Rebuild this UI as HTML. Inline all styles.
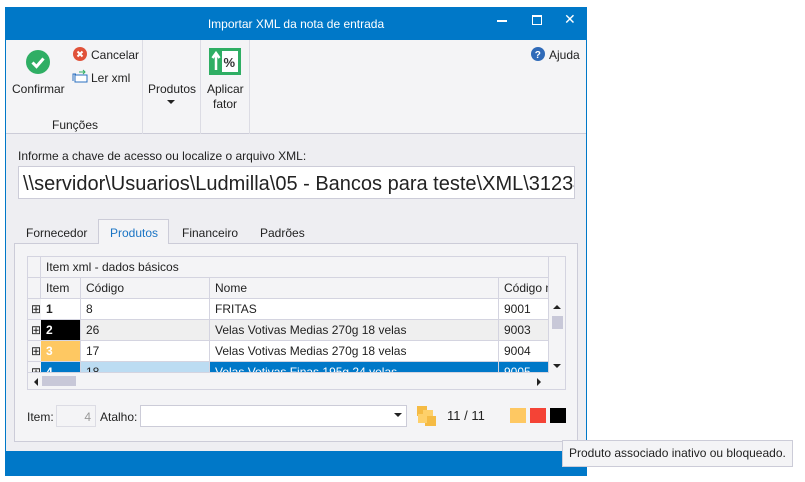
<!DOCTYPE html>
<html><head><meta charset="utf-8"><style>
*{box-sizing:border-box;margin:0;padding:0}
body{width:805px;height:482px;background:#fff;font-family:"Liberation Sans",sans-serif;font-size:12px;color:#222;position:relative;overflow:hidden}
.a{position:absolute}
.win{left:5px;top:7px;width:582px;height:469px;background:#eeeef2;border:1px solid #0078c8}
.t{white-space:nowrap}
.cell{position:absolute;border-right:1px solid #d4d4e0;border-bottom:1px solid #d4d4e0;padding-left:5px;line-height:20px;white-space:nowrap;overflow:hidden}
</style></head><body>
<div class="a win"></div>
<div class="a" style="left:5px;top:7px;width:582px;height:33px;background:#0078c8"></div>
<div class="a t" style="left:0;top:17px;width:592px;text-align:center;color:#fff;font-size:12px">Importar XML da nota de entrada</div>
<div class="a" style="left:497px;top:20px;width:10px;height:2px;background:#fff"></div>
<div class="a" style="left:532px;top:15px;width:10px;height:10px;border:1px solid #fff;border-top-width:2px"></div>
<div class="a t" style="left:564px;top:11px;color:#fff;font-size:14px">✕</div>
<div class="a" style="left:6px;top:40px;width:580px;height:94px;background:#f4f4f6;border-bottom:1px solid #ccccd8"></div>
<div class="a" style="left:142px;top:40px;width:1px;height:94px;background:#dcdce4"></div>
<div class="a" style="left:200px;top:40px;width:1px;height:94px;background:#dcdce4"></div>
<div class="a" style="left:249px;top:40px;width:1px;height:94px;background:#dcdce4"></div>
<svg class="a" style="left:26px;top:50px" width="24" height="24"><circle cx="12" cy="12" r="12" fill="#2fae64"/><path d="M6.5 12.5l4 4 7-8" stroke="#fff" stroke-width="3" fill="none"/></svg>
<div class="a t" style="left:12px;top:82px">Confirmar</div>
<svg class="a" style="left:73px;top:47px" width="14" height="14"><circle cx="7" cy="7" r="7" fill="#e0523a"/><path d="M4.5 4.5l5 5M9.5 4.5l-5 5" stroke="#fff" stroke-width="2"/></svg>
<div class="a t" style="left:91px;top:48px">Cancelar</div>
<svg class="a" style="left:72px;top:68px" width="16" height="16"><rect x="3" y="7" width="12" height="7" fill="#fff" stroke="#2a6fc0"/><path d="M1 13V6h3" stroke="#2a6fc0" fill="none"/><path d="M7 4h6M11 2l2 2-2 2" stroke="#2fae64" fill="none"/></svg>
<div class="a t" style="left:91px;top:71px">Ler xml</div>
<div class="a t" style="left:52px;top:118px">Funções</div>
<div class="a t" style="left:148px;top:82px">Produtos</div>
<div class="a" style="left:167px;top:100px;border-left:4px solid transparent;border-right:4px solid transparent;border-top:4px solid #222"></div>
<svg class="a" style="left:209px;top:48px" width="32" height="27"><rect width="32" height="27" fill="#2fae64"/><rect x="13" y="3" width="16" height="21" fill="#fff"/><path d="M7 22V6M3.5 10L7 5l3.5 5" stroke="#fff" stroke-width="2.5" fill="none"/><text x="14.5" y="19" font-size="13" font-weight="bold" fill="#333" font-family="Liberation Sans">%</text></svg>
<div class="a t" style="left:207px;top:82px;line-height:15px;text-align:center;width:36px">Aplicar<br>fator</div>
<svg class="a" style="left:531px;top:47px" width="14" height="14"><circle cx="7" cy="7" r="7" fill="#2f6ab8"/><text x="3.8" y="11" font-size="10" font-weight="bold" fill="#fff" font-family="Liberation Sans">?</text></svg>
<div class="a t" style="left:549px;top:48px">Ajuda</div>
<div class="a t" style="left:18px;top:149px">Informe a chave de acesso ou localize o arquivo XML:</div>
<div class="a" style="left:18px;top:166px;width:557px;height:33px;background:#fff;border:1px solid #ccccd8;overflow:hidden"><div class="t" style="font-size:20px;padding:6px 0 0 4px">\\servidor\Usuarios\Ludmilla\05 - Bancos para teste\XML\31234567</div></div>
<div class="a" style="left:14px;top:243px;width:564px;height:199px;background:#f4f4f6;border:1px solid #ccccd8"></div>
<div class="a" style="left:98px;top:219px;width:71px;height:25px;background:#f4f4f6;border:1px solid #ccccd8;border-bottom:none"></div>
<div class="a t" style="left:26px;top:226px">Fornecedor</div>
<div class="a t" style="left:110px;top:226px;color:#1a74c4">Produtos</div>
<div class="a t" style="left:182px;top:226px">Financeiro</div>
<div class="a t" style="left:260px;top:226px">Padrões</div>
<div class="a" style="left:27px;top:256px;width:539px;height:134px;background:#f4f4f6;border:1px solid #d4d4e0;overflow:hidden">
 <div class="cell" style="left:0;top:0;width:13px;height:21px"></div>
 <div class="cell" style="left:13px;top:0;width:508px;height:21px">Item xml - dados básicos</div>
 <div class="cell" style="left:0;top:21px;width:13px;height:21px"></div>
 <div class="cell" style="left:13px;top:21px;width:40px;height:21px">Item</div>
 <div class="cell" style="left:53px;top:21px;width:129px;height:21px">Código</div>
 <div class="cell" style="left:182px;top:21px;width:289px;height:21px">Nome</div>
 <div class="cell" style="left:471px;top:21px;width:50px;height:21px">Código n</div>
 <div class="cell" style="left:0;top:42px;width:13px;height:21px;border-right:none;padding-left:3px">⊞</div>
 <div class="cell" style="left:13px;top:42px;width:40px;height:21px;background:#fff;font-weight:bold">1</div>
 <div class="cell" style="left:53px;top:42px;width:129px;height:21px;background:#fff">8</div>
 <div class="cell" style="left:182px;top:42px;width:289px;height:21px;background:#fff">FRITAS</div>
 <div class="cell" style="left:471px;top:42px;width:50px;height:21px;background:#fff">9001</div>
 <div class="cell" style="left:0;top:63px;width:13px;height:21px;border-right:none;padding-left:3px">⊞</div>
 <div class="cell" style="left:13px;top:63px;width:40px;height:21px;background:#000;color:#fff;font-weight:bold">2</div>
 <div class="cell" style="left:53px;top:63px;width:129px;height:21px;background:#efefef">26</div>
 <div class="cell" style="left:182px;top:63px;width:289px;height:21px;background:#efefef">Velas Votivas Medias 270g 18 velas</div>
 <div class="cell" style="left:471px;top:63px;width:50px;height:21px;background:#efefef">9003</div>
 <div class="cell" style="left:0;top:84px;width:13px;height:21px;border-right:none;padding-left:3px">⊞</div>
 <div class="cell" style="left:13px;top:84px;width:40px;height:21px;background:#fec862;color:#fff;font-weight:bold">3</div>
 <div class="cell" style="left:53px;top:84px;width:129px;height:21px;background:#fff">17</div>
 <div class="cell" style="left:182px;top:84px;width:289px;height:21px;background:#fff">Velas Votivas Medias 270g 18 velas</div>
 <div class="cell" style="left:471px;top:84px;width:50px;height:21px;background:#fff">9004</div>
 <div class="cell" style="left:0;top:105px;width:13px;height:11px;border-right:none;padding-left:3px">⊞</div>
 <div class="cell" style="left:13px;top:105px;width:40px;height:11px;background:#0078c8;color:#fff;font-weight:bold">4</div>
 <div class="cell" style="left:53px;top:105px;width:129px;height:11px;background:#bcdcf2">18</div>
 <div class="cell" style="left:182px;top:105px;width:289px;height:11px;background:#0078c8;color:#fff">Velas Votivas Finas 195g 24 velas</div>
 <div class="cell" style="left:471px;top:105px;width:50px;height:11px;background:#0078c8;color:#fff">9005</div>
 <div class="a" style="left:521px;top:42px;width:17px;height:74px;background:#f4f4f6"></div>
 <div class="a" style="left:525px;top:48px;border-left:4px solid transparent;border-right:4px solid transparent;border-bottom:4px solid #222"></div>
 <div class="a" style="left:524px;top:59px;width:11px;height:13px;background:#c8c8d8"></div>
 <div class="a" style="left:525px;top:107px;border-left:4px solid transparent;border-right:4px solid transparent;border-top:4px solid #222"></div>
 <div class="a" style="left:0;top:116px;width:521px;height:17px;background:#f4f4f6"></div>
 <div class="a" style="left:6px;top:121px;border-top:4px solid transparent;border-bottom:4px solid transparent;border-right:4px solid #222"></div>
 <div class="a" style="left:14px;top:119px;width:34px;height:10px;background:#c8c8d8"></div>
 <div class="a" style="left:509px;top:121px;border-top:4px solid transparent;border-bottom:4px solid transparent;border-left:4px solid #222"></div>
</div>
<div class="a t" style="left:27px;top:410px">Item:</div>
<div class="a" style="left:56px;top:405px;width:40px;height:22px;border:1px solid #dcdce4;color:#999;text-align:right;padding:4px 4px 0 0">4</div>
<div class="a t" style="left:100px;top:410px">Atalho:</div>
<div class="a" style="left:140px;top:405px;width:267px;height:22px;background:#fff;border:1px solid #ccccd8"></div>
<div class="a" style="left:394px;top:413px;border-left:4px solid transparent;border-right:4px solid transparent;border-top:4px solid #222"></div>
<svg class="a" style="left:416px;top:405px" width="22" height="22"><rect x="1" y="1" width="10" height="10" fill="#f5bb44"/><rect x="7" y="5" width="10" height="9" fill="#fed06a"/><rect x="9" y="11" width="11" height="10" fill="#f5bb44"/><rect x="2" y="9" width="9" height="9" fill="#fed06a"/></svg>
<div class="a t" style="left:447px;top:408px;font-size:13px">11 / 11</div>
<div class="a" style="left:510px;top:408px;width:16px;height:15px;background:#fec862"></div>
<div class="a" style="left:530px;top:408px;width:16px;height:15px;background:#f44336"></div>
<div class="a" style="left:550px;top:408px;width:16px;height:15px;background:#000"></div>
<div class="a" style="left:5px;top:451px;width:582px;height:25px;background:#0078c8"></div>
<div class="a t" style="left:562px;top:440px;width:231px;height:27px;background:#f4f4f6;border:1px solid #ccccd8;padding:5px 0 0 6px;color:#222">Produto associado inativo ou bloqueado.</div>
</body></html>
